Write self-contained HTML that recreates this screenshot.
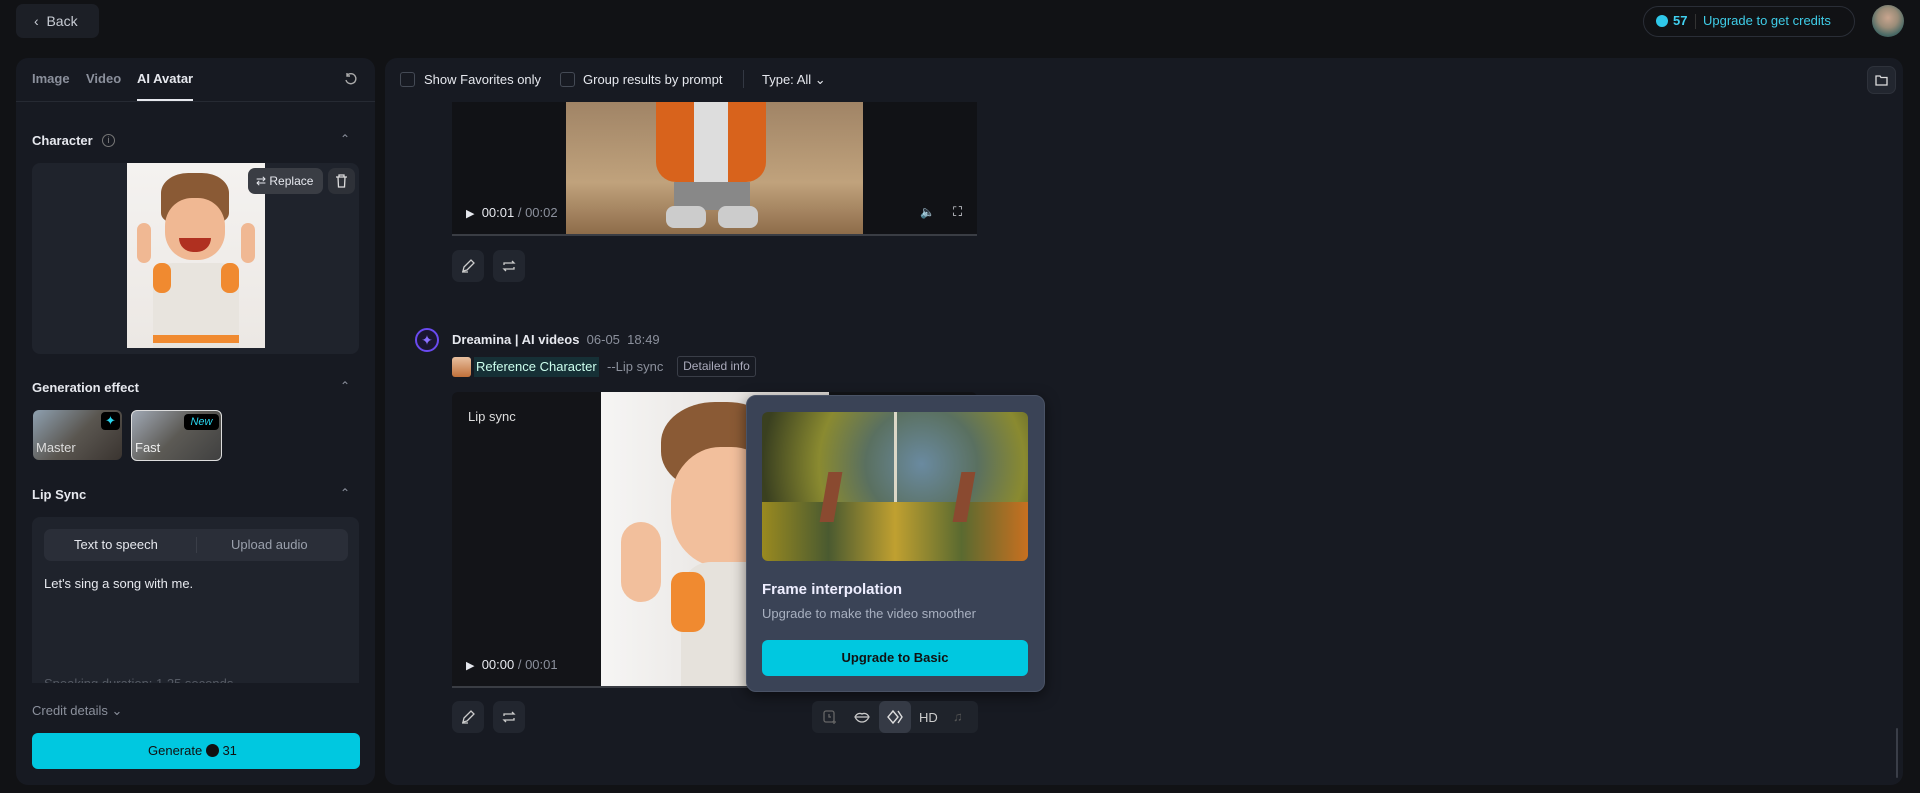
<!DOCTYPE html><html><head><meta charset="utf-8"><style>
*{box-sizing:border-box;margin:0;padding:0}
body{width:1920px;height:793px;background:#111215;font-family:"Liberation Sans",sans-serif;color:#e6e8ee;position:relative;overflow:hidden;font-size:14px}
.a{position:absolute}
.panel{background:#171a22;border-radius:12px}
.btn{background:#22262f;border-radius:7px}
.t{white-space:nowrap}
.g{color:#8b909c}
svg{display:block}
</style></head><body>
<div class="a btn" style="left:16px;top:4px;width:83px;height:34px;background:#1c1f26"></div>
<div class="a t" style="left:34px;top:13px;font-size:14px;color:#c8ccd4">&#8249;&nbsp; Back</div>

<div class="a" style="left:1643px;top:6px;width:212px;height:31px;border:1px solid #2a2e37;border-radius:16px"></div>
<div class="a" style="left:1656px;top:15px;width:12px;height:12px;border-radius:50%;background:#2fc8ea"></div>
<div class="a t" style="left:1673px;top:13px;color:#40d0f0;font-weight:bold;font-size:13px">57</div>
<div class="a" style="left:1695px;top:14px;width:1px;height:15px;background:#333"></div>
<div class="a t" style="left:1703px;top:13px;color:#3fcde8;font-size:13px">Upgrade to get credits</div>
<div class="a" style="left:1872px;top:5px;width:32px;height:32px;border-radius:50%;background:radial-gradient(circle at 50% 40%,#c9a58f 0,#9a8c78 40%,#4a6a66 70%,#2a3a3a 100%)"></div>

<div class="a panel" style="left:16px;top:58px;width:359px;height:727px"></div>
<div class="a t g" style="left:32px;top:71px;font-weight:bold;font-size:13px">Image</div>
<div class="a t g" style="left:86px;top:71px;font-weight:bold;font-size:13px">Video</div>
<div class="a t" style="left:137px;top:71px;font-weight:bold;font-size:13px">AI Avatar</div>
<div class="a" style="left:137px;top:99px;width:56px;height:2px;background:#e6e8ee"></div>
<div class="a" style="left:16px;top:101px;width:359px;height:1px;background:#262a33"></div>
<svg class="a" style="left:344px;top:72px" width="14" height="14" viewBox="0 0 14 14" fill="none" stroke="#aaa" stroke-width="1.4"><path d="M3 3.5A5 5 0 1 1 2 8"/><path d="M3 1v3h3"/></svg>

<div class="a t" style="left:32px;top:133px;font-weight:bold;font-size:13px">Character</div>
<div class="a" style="left:102px;top:134px;width:13px;height:13px;border:1px solid #777;border-radius:50%;font-size:9px;color:#888;text-align:center;line-height:11px">i</div>
<div class="a g" style="left:340px;top:132px;font-size:12px">&#8963;</div>
<div class="a" style="left:32px;top:163px;width:327px;height:191px;background:#1f232c;border-radius:8px"></div>
<div class="a" style="left:127px;top:163px;width:138px;height:185px;background:linear-gradient(#f4f2f0,#ece8e4);overflow:hidden">
 <div class="a" style="left:34px;top:10px;width:68px;height:50px;border-radius:40% 40% 20% 20%;background:#8a5a35"></div>
 <div class="a" style="left:38px;top:35px;width:60px;height:62px;border-radius:45%;background:#f0b893"></div>
 <div class="a" style="left:52px;top:75px;width:32px;height:14px;border-radius:0 0 16px 16px;background:#b03020"></div>
 <div class="a" style="left:26px;top:100px;width:86px;height:85px;border-radius:20px 20px 0 0;background:#e8e4de"></div>
 <div class="a" style="left:26px;top:100px;width:18px;height:30px;border-radius:8px;background:#f08a30"></div>
 <div class="a" style="left:94px;top:100px;width:18px;height:30px;border-radius:8px;background:#f08a30"></div>
 <div class="a" style="left:10px;top:60px;width:14px;height:40px;border-radius:7px;background:#f0b893"></div>
 <div class="a" style="left:114px;top:60px;width:14px;height:40px;border-radius:7px;background:#f0b893"></div>
 <div class="a" style="left:26px;top:172px;width:86px;height:8px;background:#f08a30"></div>
</div>
<div class="a btn" style="left:248px;top:168px;width:75px;height:26px;background:#3a3d44"></div>
<div class="a t" style="left:256px;top:174px;font-size:12px">&#8644; Replace</div>
<div class="a btn" style="left:328px;top:168px;width:27px;height:26px;background:#2e3138"></div>
<svg class="a" style="left:335px;top:174px" width="13" height="14" viewBox="0 0 13 14" fill="none" stroke="#ddd" stroke-width="1.3"><path d="M1 3h11M4 3V1h5v2M3 3l.5 10h6L10 3"/></svg>

<div class="a t" style="left:32px;top:380px;font-weight:bold;font-size:13px">Generation effect</div>
<div class="a g" style="left:340px;top:379px;font-size:12px">&#8963;</div>
<div class="a" style="left:33px;top:410px;width:89px;height:50px;border-radius:6px;background:linear-gradient(135deg,#8ea0b0,#5a5650 50%,#3a3430);overflow:hidden"><div class="a" style="left:68px;top:2px;width:19px;height:18px;background:#000;border-radius:4px;color:#29d5ee;text-align:center;font-size:13px;line-height:18px">&#10022;</div><div class="a t" style="left:3px;top:30px;font-size:13px;color:#ddd">Master</div></div>
<div class="a" style="left:131px;top:410px;width:91px;height:51px;border-radius:6px;border:1.5px solid #ddd;background:linear-gradient(135deg,#a0a8b4,#5c5a55 50%,#404040);overflow:hidden"><div class="a t" style="left:52px;top:3px;width:35px;height:16px;background:#000;border-radius:4px;color:#29d5ee;text-align:center;font-size:11px;font-style:italic;line-height:16px">New</div><div class="a t" style="left:3px;top:29px;font-size:13px;color:#eee">Fast</div></div>

<div class="a t" style="left:32px;top:487px;font-weight:bold;font-size:13px">Lip Sync</div>
<div class="a g" style="left:340px;top:486px;font-size:12px">&#8963;</div>
<div class="a" style="left:32px;top:517px;width:327px;height:166px;background:#1f232c;border-radius:8px 8px 0 0;overflow:hidden">
 <div class="a" style="left:12px;top:12px;width:304px;height:32px;background:#2a2e38;border-radius:7px"></div>
 <div class="a t" style="left:42px;top:20px;font-size:13px">Text to speech</div>
 <div class="a" style="left:164px;top:20px;width:1px;height:16px;background:#3a3e48"></div>
 <div class="a t g" style="left:199px;top:20px;font-size:13px;color:#9aa0ac">Upload audio</div>
 <div class="a t" style="left:12px;top:59px;font-size:13px">Let's sing a song with me.</div>
 <div class="a t" style="left:12px;top:159px;font-size:13px;color:#555a64">Speaking duration: 1.25 seconds</div>
</div>
<div class="a t g" style="left:32px;top:703px;font-size:13px">Credit details &#8964;</div>
<div class="a" style="left:32px;top:733px;width:328px;height:36px;background:#00c8e0;border-radius:6px"></div>
<div class="a t" style="left:148px;top:743px;font-size:13px;color:#111">Generate <span style="display:inline-block;width:13px;height:13px;border-radius:50%;background:#111;vertical-align:-2px"></span> 31</div>

<div class="a panel" style="left:385px;top:58px;width:1518px;height:727px"></div>
<div class="a" style="left:400px;top:72px;width:15px;height:15px;border:1px solid #444a55;border-radius:3px"></div>
<div class="a t" style="left:424px;top:72px;font-size:13px">Show Favorites only</div>
<div class="a" style="left:560px;top:72px;width:15px;height:15px;border:1px solid #444a55;border-radius:3px"></div>
<div class="a t" style="left:583px;top:72px;font-size:13px">Group results by prompt</div>
<div class="a" style="left:743px;top:70px;width:1px;height:18px;background:#333843"></div>
<div class="a t" style="left:762px;top:72px;font-size:13px">Type: All &#8964;</div>
<div class="a btn" style="left:1867px;top:66px;width:29px;height:28px;background:#22262f;border:1px solid #2e323b"></div>
<svg class="a" style="left:1875px;top:74px" width="13" height="12" viewBox="0 0 13 12" fill="none" stroke="#ddd" stroke-width="1.3"><path d="M1 2h4l1 1.5h6V11H1z"/></svg>

<div class="a" style="left:452px;top:102px;width:525px;height:134px;background:#111216"></div>
<div class="a" style="left:566px;top:102px;width:297px;height:134px;background:linear-gradient(#a08466,#c0a27c 60%,#8c6a48)">
 <div class="a" style="left:90px;top:0;width:110px;height:80px;background:#d8631c;border-radius:0 0 20px 20px"></div>
 <div class="a" style="left:128px;top:0;width:34px;height:90px;background:#ddd"></div>
 <div class="a" style="left:108px;top:80px;width:76px;height:28px;background:#888"></div>
 <div class="a" style="left:100px;top:104px;width:40px;height:22px;border-radius:8px;background:#ccc"></div>
 <div class="a" style="left:152px;top:104px;width:40px;height:22px;border-radius:8px;background:#ccc"></div>
</div>
<div class="a t" style="left:466px;top:205px;font-size:13px"><span style="font-size:11px">&#9654;</span>&nbsp; 00:01 <span class="g">/ 00:02</span></div>
<div class="a t" style="left:920px;top:205px;font-size:12px">&#128264;</div>
<div class="a t" style="left:953px;top:204px;font-size:13px">&#x26F6;</div>
<div class="a" style="left:452px;top:234px;width:525px;height:2px;background:#3a3d44"></div>
<div class="a btn" style="left:452px;top:250px;width:32px;height:32px"></div>
<div class="a btn" style="left:493px;top:250px;width:32px;height:32px"></div>
<svg class="a" style="left:461px;top:259px" width="14" height="14" viewBox="0 0 14 14" fill="none" stroke="#ccc" stroke-width="1.3"><path d="M2 12l1-4 7-7 3 3-7 7zM1 13h6"/></svg>
<svg class="a" style="left:502px;top:259px" width="14" height="14" viewBox="0 0 14 14" fill="none" stroke="#ccc" stroke-width="1.3"><path d="M2 6V4h10l-2-2M12 8v2H2l2 2"/></svg>

<div class="a" style="left:415px;top:328px;width:24px;height:24px;border-radius:50%;border:2px solid #6a4af0;background:#1a1630;color:#8a70ff;text-align:center;font-size:14px;line-height:20px">&#10022;</div>
<div class="a t" style="left:452px;top:332px;font-size:13px;font-weight:bold">Dreamina | AI videos <span class="g" style="font-weight:normal">&nbsp;06-05 &nbsp;18:49</span></div>
<div class="a" style="left:452px;top:357px;width:19px;height:20px;border-radius:3px;background:linear-gradient(#e8c0a0,#c0703a)"></div>
<div class="a t" style="left:474px;top:357px;height:20px;padding:0 2px;background:#163036;font-size:13px;line-height:20px;color:#cfe">Reference Character</div>
<div class="a t g" style="left:607px;top:359px;font-size:13px">--Lip sync</div>
<div class="a t" style="left:677px;top:356px;width:79px;height:21px;border:1px solid #3a3e48;border-radius:3px;font-size:12px;color:#aab;text-align:center;line-height:19px">Detailed info</div>

<div class="a" style="left:452px;top:392px;width:525px;height:296px;background:#131418;border-radius:6px 6px 0 0"></div>
<div class="a" style="left:601px;top:392px;width:228px;height:296px;background:linear-gradient(90deg,#f6f5f4,#dedad6);overflow:hidden">
 <div class="a" style="left:60px;top:10px;width:120px;height:90px;border-radius:45%;background:#8a5a35"></div>
 <div class="a" style="left:70px;top:55px;width:110px;height:120px;border-radius:45%;background:#f2bf9c"></div>
 <div class="a" style="left:80px;top:170px;width:150px;height:126px;border-radius:30px 30px 0 0;background:#e6e2dc"></div>
 <div class="a" style="left:70px;top:180px;width:34px;height:60px;border-radius:12px;background:#f08a30"></div>
 <div class="a" style="left:20px;top:130px;width:40px;height:80px;border-radius:20px;background:#f2bf9c"></div>
</div>
<div class="a t" style="left:468px;top:409px;font-size:13px;color:#ddd">Lip sync</div>
<div class="a t" style="left:466px;top:657px;font-size:13px"><span style="font-size:11px">&#9654;</span>&nbsp; 00:00 <span class="g">/ 00:01</span></div>
<div class="a" style="left:452px;top:686px;width:525px;height:2px;background:#3a3d44"></div>

<div class="a" style="left:746px;top:395px;width:299px;height:297px;background:#3a4356;border-radius:10px;border:1px solid #4a5366;box-shadow:0 4px 14px rgba(0,0,0,.5)"></div>
<div class="a" style="left:762px;top:412px;width:266px;height:149px;border-radius:6px;overflow:hidden;background:radial-gradient(circle at 60% 35%,#6a8aa0 0,#5a7060 30%,#8a8a30 55%,#3a4020 85%)">
 <div class="a" style="left:132px;top:0;width:3px;height:149px;background:#dcd8c8"></div>
 <div class="a" style="left:0;top:90px;width:266px;height:59px;background:linear-gradient(90deg,#9a8a20,#4a5a30,#c0a030,#5a6a30,#c87020)"></div>
 <div class="a" style="left:62px;top:60px;width:14px;height:50px;background:#8a4a30;transform:skewX(-10deg)"></div>
 <div class="a" style="left:195px;top:60px;width:14px;height:50px;background:#8a4a30;transform:skewX(-10deg)"></div>
</div>
<div class="a t" style="left:762px;top:581px;font-size:15px;font-weight:bold;color:#eef">Frame interpolation</div>
<div class="a t" style="left:762px;top:606px;font-size:13px;color:#a8b0c0">Upgrade to make the video smoother</div>
<div class="a" style="left:762px;top:640px;width:266px;height:36px;background:#00c8e0;border-radius:6px;color:#111;font-weight:bold;font-size:13px;text-align:center;line-height:36px">Upgrade to Basic</div>

<div class="a btn" style="left:452px;top:701px;width:32px;height:32px"></div>
<div class="a btn" style="left:493px;top:701px;width:32px;height:32px"></div>
<svg class="a" style="left:461px;top:710px" width="14" height="14" viewBox="0 0 14 14" fill="none" stroke="#ccc" stroke-width="1.3"><path d="M2 12l1-4 7-7 3 3-7 7zM1 13h6"/></svg>
<svg class="a" style="left:502px;top:710px" width="14" height="14" viewBox="0 0 14 14" fill="none" stroke="#ccc" stroke-width="1.3"><path d="M2 6V4h10l-2-2M12 8v2H2l2 2"/></svg>
<div class="a" style="left:812px;top:701px;width:166px;height:32px;background:#1f232b;border-radius:6px"></div>
<div class="a" style="left:879px;top:701px;width:32px;height:32px;background:#353a45;border-radius:6px"></div>
<svg class="a" style="left:822px;top:709px" width="16" height="16" viewBox="0 0 16 16" fill="none" stroke="#666" stroke-width="1.3"><rect x="2" y="2" width="10" height="11" rx="2"/><path d="M7 5v3h2M12 11v4M10 13h4"/></svg>
<svg class="a" style="left:854px;top:710px" width="16" height="14" viewBox="0 0 16 14" fill="none" stroke="#ccc" stroke-width="1.3"><path d="M1 7c2-4 5-4 7-3 2-1 5-1 7 3-2 4-5 5-7 5S3 11 1 7zM2 7h12"/></svg>
<svg class="a" style="left:886px;top:709px" width="18" height="16" viewBox="0 0 18 16" fill="none" stroke="#ddd" stroke-width="1.4"><path d="M7 2L2 8l5 6 5-6zM12 2l4 6-4 6"/></svg>
<div class="a t" style="left:919px;top:710px;font-size:13px;color:#ccc">HD</div>
<div class="a t" style="left:953px;top:709px;font-size:13px;color:#555">&#9835;</div>
<div class="a" style="left:1896px;top:728px;width:2px;height:50px;background:#3a3e48;border-radius:1px"></div>
</body></html>
